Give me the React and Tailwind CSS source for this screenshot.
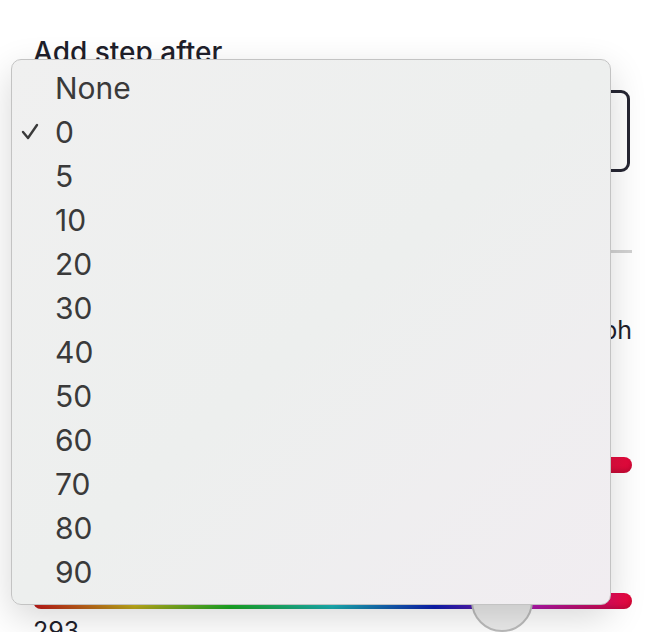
import React from 'react';

const options = ['None', '0', '5', '10', '20', '30', '40', '50', '60', '70', '80', '90'];

const Check = () => (
    <svg width="20" height="18" viewBox="0 0 20 18" className="absolute left-[8px] top-1/2 -translate-y-1/2">
        <polyline points="3,9 8,15 17,2" fill="none" stroke="#3a3a3a" strokeWidth="2.4" strokeLinecap="round" strokeLinejoin="round" />
    </svg>
);

const App = () => {
    const selected = '0';
    const hue = 293;

    return (
        <div className="relative w-[668px] h-[632px] overflow-hidden bg-white text-[#1f1f2b]" style={{ fontFamily: 'Inter, "Noto Sans", sans-serif' }}>
            <div className="pl-[33px] pr-[36px] pt-[34px]">
                <label className="block text-[28px] leading-[36px] font-medium">Add step after</label>
                <div className="mt-[20px] w-[597px] h-[82px] rounded-[9px] border-[3px] border-[#262633] bg-white" />

                <div className="mt-[78px] h-[3px] w-full bg-[#d2d2d2]" />

                <div className="mt-[61px] flex justify-end text-[25px] leading-[32px]">
                    <span>Hue graph</span>
                </div>

                <div className="mt-[111px] h-[16px] w-full rounded-full bg-[linear-gradient(to_right,#9a9a9a,#e4093b)] shadow-[inset_0_-3px_4px_rgba(0,0,0,0.15)]" />

                <div className="relative mt-[120px] h-[16px] w-full">
                    <div className="h-full w-full rounded-full bg-[linear-gradient(to_right,#d81c1c_0%,#d8c41e_17%,#1ec02a_33%,#1ec8cc_50%,#0f22c8_67%,#c41cc4_83%,#e8083a_100%)] shadow-[inset_0_-3px_4px_rgba(0,0,0,0.15)]" />
                    <div className="absolute left-[438px] top-1/2 -translate-y-1/2 w-[62px] h-[62px] rounded-full bg-[#ebebeb] border-2 border-[#bcbcbc]" />
                </div>

                <div className="mt-[6px] text-[25px] leading-[32px]">{hue}</div>
            </div>

            {/* native select menu, open */}
            <div className="absolute left-[11px] top-[59px] w-[600px] h-[546px] rounded-[10px] border border-[#c3c3c3] bg-linear-to-br from-[#f0f0f0] via-[#edefee] to-[#f1edf1] shadow-[0_12px_36px_rgba(0,0,0,0.16)] pt-[6px] pb-[11px]">
                {options.map(opt => (
                    <div key={opt} className="relative h-[44px] flex items-center pl-[43px] text-[30px] text-[#3a3a3a]">
                        {opt === selected && <Check />}
                        <span>{opt}</span>
                    </div>
                ))}
            </div>
        </div>
    );
};

export default App;
